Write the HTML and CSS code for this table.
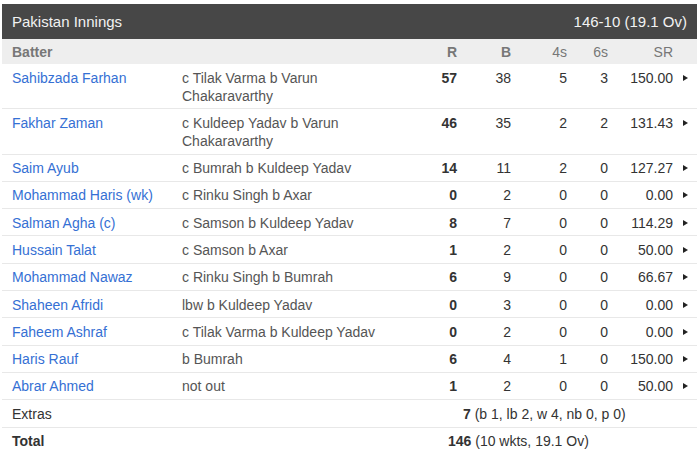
FILE: index.html
```html
<!DOCTYPE html>
<html>
<head>
<meta charset="utf-8">
<link rel="stylesheet" href="styles.css">
</head>
<body>
<div class="card">
  <div class="head"><span>Pakistan Innings</span><span>146-10 (19.1 Ov)</span></div>
  <div class="row hdr">
    <span class="b">Batter</span><span></span>
    <span class="num b">R</span><span class="num b">B</span><span class="num">4s</span><span class="num">6s</span><span class="num">SR</span><span></span>
  </div>
  <div class="row"><a class="name">Sahibzada Farhan</a><span class="dis">c Tilak Varma b Varun Chakaravarthy</span><span class="num b">57</span><span class="num">38</span><span class="num">5</span><span class="num">3</span><span class="num">150.00</span><span class="arr"></span></div>
  <div class="row"><a class="name">Fakhar Zaman</a><span class="dis">c Kuldeep Yadav b Varun Chakaravarthy</span><span class="num b">46</span><span class="num">35</span><span class="num">2</span><span class="num">2</span><span class="num">131.43</span><span class="arr"></span></div>
  <div class="row"><a class="name">Saim Ayub</a><span class="dis">c Bumrah b Kuldeep Yadav</span><span class="num b">14</span><span class="num">11</span><span class="num">2</span><span class="num">0</span><span class="num">127.27</span><span class="arr"></span></div>
  <div class="row"><a class="name">Mohammad Haris (wk)</a><span class="dis">c Rinku Singh b Axar</span><span class="num b">0</span><span class="num">2</span><span class="num">0</span><span class="num">0</span><span class="num">0.00</span><span class="arr"></span></div>
  <div class="row"><a class="name">Salman Agha (c)</a><span class="dis">c Samson b Kuldeep Yadav</span><span class="num b">8</span><span class="num">7</span><span class="num">0</span><span class="num">0</span><span class="num">114.29</span><span class="arr"></span></div>
  <div class="row"><a class="name">Hussain Talat</a><span class="dis">c Samson b Axar</span><span class="num b">1</span><span class="num">2</span><span class="num">0</span><span class="num">0</span><span class="num">50.00</span><span class="arr"></span></div>
  <div class="row"><a class="name">Mohammad Nawaz</a><span class="dis">c Rinku Singh b Bumrah</span><span class="num b">6</span><span class="num">9</span><span class="num">0</span><span class="num">0</span><span class="num">66.67</span><span class="arr"></span></div>
  <div class="row"><a class="name">Shaheen Afridi</a><span class="dis">lbw b Kuldeep Yadav</span><span class="num b">0</span><span class="num">3</span><span class="num">0</span><span class="num">0</span><span class="num">0.00</span><span class="arr"></span></div>
  <div class="row"><a class="name">Faheem Ashraf</a><span class="dis">c Tilak Varma b Kuldeep Yadav</span><span class="num b">0</span><span class="num">2</span><span class="num">0</span><span class="num">0</span><span class="num">0.00</span><span class="arr"></span></div>
  <div class="row"><a class="name">Haris Rauf</a><span class="dis">b Bumrah</span><span class="num b">6</span><span class="num">4</span><span class="num">1</span><span class="num">0</span><span class="num">150.00</span><span class="arr"></span></div>
  <div class="row"><a class="name">Abrar Ahmed</a><span class="dis">not out</span><span class="num b">1</span><span class="num">2</span><span class="num">0</span><span class="num">0</span><span class="num">50.00</span><span class="arr"></span></div>
  <div class="row sum"><span class="label">Extras</span><span class="val extras"><b>7</b> (b 1, lb 2, w 4, nb 0, p 0)</span></div>
  <div class="row sum"><span class="label b">Total</span><span class="val total"><b>146</b> (10 wkts, 19.1 Ov)</span></div>
</div>
</body>
</html>
```

FILE: styles.css
```css
* { box-sizing: border-box; }
body {
  margin: 0;
  background: #fff;
  font-family: "Liberation Sans", Arial, sans-serif;
  font-size: 14px;
  color: #333;
}
.card {
  margin: 4px 3px 0 2px;
}
.head {
  height: 35px;
  background: #474747;
  color: #f2f2f2;
  font-size: 15px;
  display: flex;
  justify-content: space-between;
  align-items: center;
  padding: 0 10px;
}
.row {
  display: grid;
  grid-template-columns: 170px 238px 37px 54px 56px 41px 65px 24px;
  padding: 4.5px 0 3.8px 10px;
  line-height: 18px;
  border-bottom: 1px solid #e8e8e8;
  align-items: start;
}
.row.hdr {
  background: #eeeeee;
  color: #777;
  height: 25px;
  padding: 3px 0 3px 10px;
  border-bottom: none;
  align-items: center;
}
.name {
  color: #3570d4;
  text-decoration: none;
  padding-right: 8px;
}
.dis {
  color: #555;
  padding-right: 20px;
}
.num {
  text-align: right;
  color: #333;
}
.hdr .num { color: #777; }
.b { font-weight: bold; }
.arr {
  justify-self: start;
  margin: 6px 0 0 10px;
  width: 0;
  height: 0;
  border-left: 5px solid #222;
  border-top: 3px solid transparent;
  border-bottom: 3px solid transparent;
}
.sum .label { color: #333; }
.sum .val {
  grid-column: 3 / -1;
  color: #333;
}
.sum .val b { font-weight: bold; }
.val.extras { padding-left: 43px; }
.val.total { padding-left: 28px; }
```
